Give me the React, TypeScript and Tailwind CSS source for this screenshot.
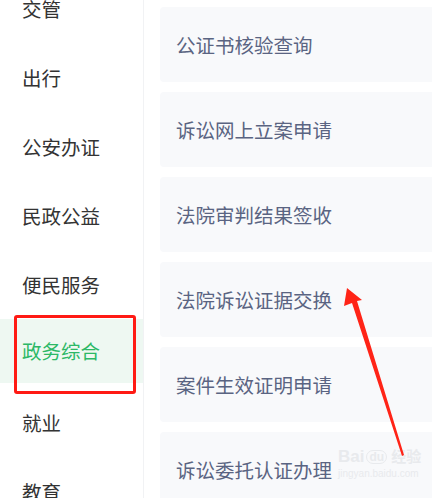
const menu = ["交管", "出行", "公安办证", "民政公益", "便民服务", "政务综合", "就业", "教育"];
const services = [
  "公证书核验查询",
  "诉讼网上立案申请",
  "法院审判结果签收",
  "法院诉讼证据交换",
  "案件生效证明申请",
  "诉讼委托认证办理",
];

export default function App() {
  return (
    <div
      className="relative flex h-[498px] w-[432px] overflow-hidden bg-white"
      style={{ fontFamily: '"Noto Sans CJK SC", "Noto Sans", sans-serif' }}
    >
      {/* left menu */}
      <div className="w-[144px] shrink-0 border-r border-[#f1f2f4]">
        <div className="mt-[-26px] flex flex-col">
          {menu.map((m) => {
            const active = m === "政务综合";
            return (
              <div key={m} className="flex h-[69px] items-center">
                {active ? (
                  <div className="relative mt-[-6px] flex h-[64px] w-full items-center bg-[#eef8f2] pl-[22px] text-[19.5px] text-[#2cb866]">
                    {m}
                    <div className="absolute left-[14px] top-[-4px] h-[79px] w-[122px] rounded-[3px] border-[3px] border-[#ff1a14]" />
                  </div>
                ) : (
                  <div className="pl-[22px] text-[19.5px] text-[#333333]">{m}</div>
                )}
              </div>
            );
          })}
        </div>
      </div>

      {/* right list */}
      <div className="flex-1 pl-[16px] pt-[7px]">
        <div className="mr-[-12px] flex flex-col gap-[10px]">
          {services.map((s) => (
            <div
              key={s}
              className="flex h-[75px] items-center rounded-[4px] bg-[#f8f9fb] pl-[16px] text-[19.5px] text-[#5a6482]"
            >
              {s}
            </div>
          ))}
        </div>
      </div>

      {/* watermark */}
      <div className="pointer-events-none absolute left-[338px] top-[448px] flex flex-col items-start text-[#e8eaed]">
        <div className="flex items-center gap-[2px] text-[17px] font-bold leading-none" style={{ fontFamily: '"Liberation Sans", "Noto Sans CJK SC", sans-serif' }}>
          <span>Bai</span>
          <span className="rounded-full border border-[#e8eaed] px-[2px] text-[12px]">du</span>
          <span className="ml-[2px] text-[15px]">经验</span>
        </div>
        <div className="mt-[4px] text-[10px] leading-none" style={{ fontFamily: '"Liberation Sans", sans-serif' }}>
          jingyan.baidu.com
        </div>
      </div>

      {/* red arrow */}
      <svg className="pointer-events-none absolute left-0 top-0" width="432" height="498" viewBox="0 0 432 498">
        <polygon
          points="347,288 362,300 357,301 404,455 402,456 352,303 344,306"
          fill="#ff2417"
        />
      </svg>
    </div>
  );
}
